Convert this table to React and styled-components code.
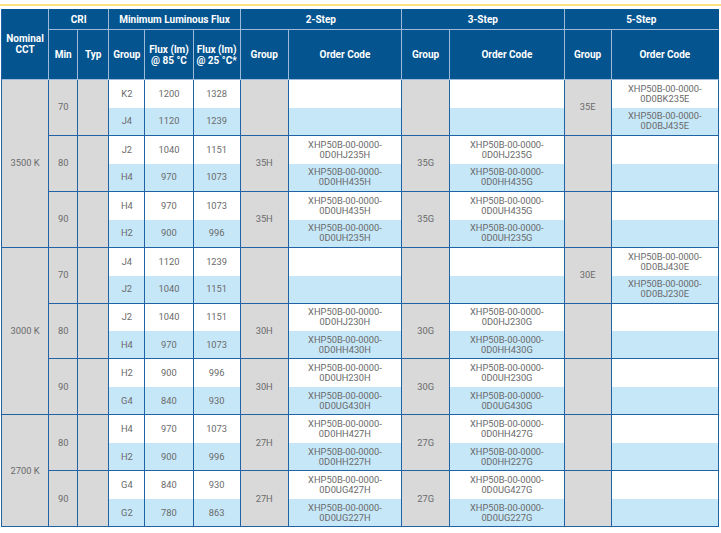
import React from "react";
import styled, { createGlobalStyle } from "styled-components";

const Global = createGlobalStyle`
  html, body { margin: 0; padding: 0; background: #ffffff; }
  body { font-family: Roboto, "Liberation Sans", sans-serif; }
`;

const Page = styled.div`
  width: 721px;
  height: 533px;
  padding-top: 4px;
  box-sizing: border-box;
  overflow: hidden;
`;

const Rule = styled.div`
  height: 2px;
  background: #fbe27e;
  margin-bottom: 3px;
`;

const Table = styled.table`
  margin-left: 1px;
  border-collapse: separate;
  border-spacing: 0;
  table-layout: fixed;
  width: 718px;
  border-left: 1px solid #1f63a5;
`;

const Head = styled.th`
  background: #03548f;
  color: #ffffff;
  font-family: Roboto, "Liberation Sans", sans-serif;
  font-weight: 700;
  font-size: 10px;
  line-height: 11px;
  text-align: center;
  vertical-align: middle;
  padding: 0 2px;
  border-right: 1px solid ${(p) => (p.$edge ? "#03548f" : "#9dbbd9")};
  border-bottom: 1px solid #9dbbd9;
`;

const HeadRowTop = styled.tr`
  height: 21px;
`;

const HeadRowBottom = styled.tr`
  height: 50px;
`;

const BodyRow = styled.tr`
  height: 27.94px;
`;

const Cell = styled.td`
  background: ${(p) => (p.$gray ? "#d9d9d9" : p.$alt ? "#c6e7f8" : "#ffffff")};
  color: #6a6a6a;
  font-family: Roboto, "Liberation Sans", sans-serif;
  font-size: 9.3px;
  line-height: 10px;
  text-align: center;
  vertical-align: middle;
  padding: 0 2px;
  border-right: 1px solid #1f63a5;
  border-bottom: ${(p) => (p.$last ? "1px solid #1f63a5" : "0")};
`;

const code = (suffix) => (
  <>
    XHP50B-00-0000-
    <br />
    {suffix}
  </>
);

const data = [
  {
    cct: "3500 K",
    cri: [
      {
        min: "70",
        rows: [["K2", "1200", "1328"], ["J4", "1120", "1239"]],
        steps: [null, null, { g: "35E", c: ["0D0BK235E", "0D0BJ435E"] }],
      },
      {
        min: "80",
        rows: [["J2", "1040", "1151"], ["H4", "970", "1073"]],
        steps: [
          { g: "35H", c: ["0D0HJ235H", "0D0HH435H"] },
          { g: "35G", c: ["0D0HJ235G", "0D0HH435G"] },
          null,
        ],
      },
      {
        min: "90",
        rows: [["H4", "970", "1073"], ["H2", "900", "996"]],
        steps: [
          { g: "35H", c: ["0D0UH435H", "0D0UH235H"] },
          { g: "35G", c: ["0D0UH435G", "0D0UH235G"] },
          null,
        ],
      },
    ],
  },
  {
    cct: "3000 K",
    cri: [
      {
        min: "70",
        rows: [["J4", "1120", "1239"], ["J2", "1040", "1151"]],
        steps: [null, null, { g: "30E", c: ["0D0BJ430E", "0D0BJ230E"] }],
      },
      {
        min: "80",
        rows: [["J2", "1040", "1151"], ["H4", "970", "1073"]],
        steps: [
          { g: "30H", c: ["0D0HJ230H", "0D0HH430H"] },
          { g: "30G", c: ["0D0HJ230G", "0D0HH430G"] },
          null,
        ],
      },
      {
        min: "90",
        rows: [["H2", "900", "996"], ["G4", "840", "930"]],
        steps: [
          { g: "30H", c: ["0D0UH230H", "0D0UG430H"] },
          { g: "30G", c: ["0D0UH230G", "0D0UG430G"] },
          null,
        ],
      },
    ],
  },
  {
    cct: "2700 K",
    cri: [
      {
        min: "80",
        rows: [["H4", "970", "1073"], ["H2", "900", "996"]],
        steps: [
          { g: "27H", c: ["0D0HH427H", "0D0HH227H"] },
          { g: "27G", c: ["0D0HH427G", "0D0HH227G"] },
          null,
        ],
      },
      {
        min: "90",
        rows: [["G4", "840", "930"], ["G2", "780", "863"]],
        steps: [
          { g: "27H", c: ["0D0UG427H", "0D0UG227H"] },
          { g: "27G", c: ["0D0UG427G", "0D0UG227G"] },
          null,
        ],
      },
    ],
  },
];

const widths = [47, 29, 31, 36, 48, 47, 48, 113, 48, 114, 47, 107];

export default function App() {
  const body = [];
  data.forEach((grp, gi) => {
    grp.cri.forEach((cr, ci) => {
      cr.rows.forEach((r, ri) => {
        const last = ri === 1;
        const alt = ri === 1;
        body.push(
          <BodyRow key={`${gi}-${ci}-${ri}`}>
            {ci === 0 && ri === 0 && (
              <Cell rowSpan={grp.cri.length * 2} $gray $last>
                {grp.cct}
              </Cell>
            )}
            {ri === 0 && (
              <>
                <Cell rowSpan={2} $gray $last>
                  {cr.min}
                </Cell>
                <Cell rowSpan={2} $gray $last />
              </>
            )}
            <Cell $alt={alt} $last={last}>{r[0]}</Cell>
            <Cell $alt={alt} $last={last}>{r[1]}</Cell>
            <Cell $alt={alt} $last={last}>{r[2]}</Cell>
            {cr.steps.map((s, si) => (
              <React.Fragment key={si}>
                {ri === 0 && (
                  <Cell rowSpan={2} $gray $last>
                    {s ? s.g : ""}
                  </Cell>
                )}
                <Cell $alt={alt} $last={last}>
                  {s ? code(s.c[ri]) : ""}
                </Cell>
              </React.Fragment>
            ))}
          </BodyRow>
        );
      });
    });
  });

  return (
    <Page>
      <Global />
      <Rule />
      <Table>
        <colgroup>
          {widths.map((w, i) => (
            <col key={i} style={{ width: `${w}px` }} />
          ))}
        </colgroup>
        <thead>
          <HeadRowTop>
            <Head rowSpan={2}>
              Nominal
              <br />
              CCT
            </Head>
            <Head colSpan={2}>CRI</Head>
            <Head colSpan={3}>Minimum Luminous Flux</Head>
            <Head colSpan={2}>2-Step</Head>
            <Head colSpan={2}>3-Step</Head>
            <Head colSpan={2} $edge>
              5-Step
            </Head>
          </HeadRowTop>
          <HeadRowBottom>
            <Head>Min</Head>
            <Head>Typ</Head>
            <Head>Group</Head>
            <Head>
              Flux (lm)
              <br />@ 85 °C
            </Head>
            <Head>
              Flux (lm)
              <br />@ 25 °C*
            </Head>
            <Head>Group</Head>
            <Head>Order Code</Head>
            <Head>Group</Head>
            <Head>Order Code</Head>
            <Head>Group</Head>
            <Head $edge>Order Code</Head>
          </HeadRowBottom>
        </thead>
        <tbody>{body}</tbody>
      </Table>
    </Page>
  );
}
